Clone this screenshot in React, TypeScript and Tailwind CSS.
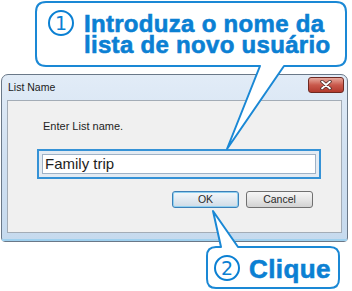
import React from "react";

export default function App() {
  return (
    <div className="relative w-[352px] h-[291px] bg-white overflow-hidden font-['Liberation_Sans',Arial,sans-serif]">
      {/* Dialog window */}
      <div className="pt-[74px] pl-[1px]">
        <div className="w-[347px] h-[168px] rounded-t-[7px] rounded-b-[4px] border border-[#6a7888] bg-gradient-to-b from-[#e2ecf7] via-[#d0e0f1] to-[#c6daee] flex flex-col">
          {/* Title bar */}
          <div className="h-[25px] flex items-start justify-between pl-[6px] pr-[3px]">
            <span className="mt-[6px] text-[10.5px] leading-[13px] text-[#1b1b1b]">List Name</span>
            <div className="mt-[2px] w-[36px] h-[16px] rounded-[3px] border border-[#6e2a22] bg-gradient-to-b from-[#e6a99e] via-[#c9594c] to-[#b23a2e] flex items-center justify-center">
              <svg width="12" height="10" viewBox="0 0 12 10">
                <path d="M2 1.5 L10 8.5 M10 1.5 L2 8.5" stroke="#4a2a26" strokeWidth="3.4" strokeLinecap="round" />
                <path d="M2 1.5 L10 8.5 M10 1.5 L2 8.5" stroke="#ffffff" strokeWidth="1.8" strokeLinecap="round" />
              </svg>
            </div>
          </div>
          {/* Client area */}
          <div className="mx-[5px] h-[133px] border border-[#a3acb6] bg-[#f0f0f0] flex flex-col">
            <div className="pl-[35px] pt-[19px] text-[11px] leading-[13px] text-[#1e1e1e]">Enter List name.</div>
            <div className="ml-[29px] mt-[16px] w-[284px] h-[30px] border-2 border-[#3592d6] bg-[#e3ebf3] p-[3px]">
              <div className="h-full border border-[#9fb2c6] bg-white flex items-center pl-[2px] text-[15px] leading-[18px] text-[#1e1e1e]">
                Family trip
              </div>
            </div>
            <div className="mt-[12px] flex justify-end gap-[7px] pr-[28px]">
              <div className="w-[67px] h-[17px] rounded-[3px] border border-[#3c80b8] bg-gradient-to-b from-[#f4f8fb] via-[#e2eaf1] to-[#cfdbe6] shadow-[inset_0_0_0_1px_#8fd0f0] flex items-center justify-center text-[10.5px] text-[#2a2a2a]">
                OK
              </div>
              <div className="w-[67px] h-[17px] rounded-[3px] border border-[#707070] bg-gradient-to-b from-[#f6f6f6] via-[#e6e6e6] to-[#d2d2d2] flex items-center justify-center text-[10.5px] text-[#2a2a2a]">
                Cancel
              </div>
            </div>
          </div>
          <div className="flex-1 border-b-2 border-[#9fd0ee]" />
        </div>
      </div>

      {/* Callout shapes */}
      <svg className="absolute left-0 top-0 pointer-events-none" width="352" height="291" viewBox="0 0 352 291">
        <path
          d="M46 2 H336 Q346 2 346 12 V56 Q346 66 336 66 H284 L227 149 L260 66 H46 Q36 66 36 56 V12 Q36 2 46 2 Z"
          fill="#ffffff"
          stroke="#1a88d5"
          strokeWidth="2"
          strokeLinejoin="round"
        />
        <path
          d="M216 247 H221 L213 211 L238 247 H330 Q339 247 339 256 V279 Q339 288 330 288 H216 Q207 288 207 279 V256 Q207 247 216 247 Z"
          fill="#ffffff"
          stroke="#1a88d5"
          strokeWidth="2"
          strokeLinejoin="round"
        />
      </svg>

      {/* Callout 1 text */}
      <div className="absolute left-[48px] top-[10px] w-[26px] h-[26px] rounded-full border-2 border-[#0b80d3] flex items-center justify-center text-[19px] leading-none text-[#0b80d3] font-['DejaVu_Sans',sans-serif]">
        1
      </div>
      <div className="absolute left-[84px] top-[13px] text-[24px] leading-[21px] font-bold tracking-[0.3px] text-[#0b80d3] [-webkit-text-stroke:0.6px_#0b80d3] whitespace-nowrap">
        <div>Introduza o nome da</div>
        <div>lista de novo usuário</div>
      </div>

      {/* Callout 2 text */}
      <div className="absolute left-[214px] top-[255px] w-[26px] h-[26px] rounded-full border-2 border-[#0b80d3] flex items-center justify-center text-[19px] leading-none text-[#0b80d3] font-['DejaVu_Sans',sans-serif]">
        2
      </div>
      <div className="absolute left-[249px] top-[256px] text-[26px] leading-[26px] font-bold tracking-[0.4px] text-[#0b80d3] [-webkit-text-stroke:0.6px_#0b80d3] whitespace-nowrap">
        Clique
      </div>
    </div>
  );
}
